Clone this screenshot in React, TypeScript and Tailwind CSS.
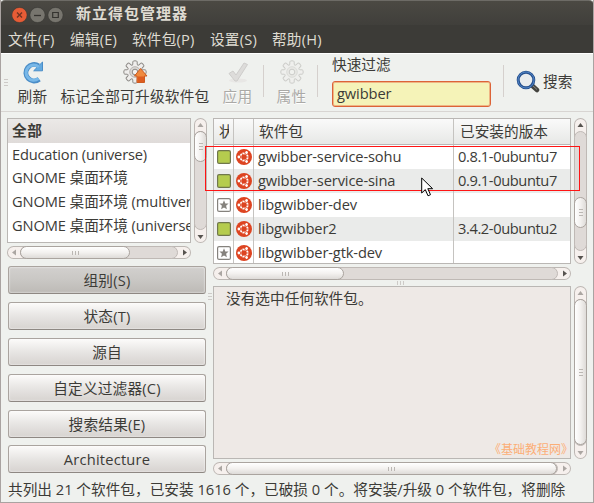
import type { ReactNode } from 'react';

const font = 'font-["Open_Sans","Noto_Sans_CJK_SC",sans-serif]';

function Arrow({ dir, dim }: { dir: 'l' | 'r' | 'u' | 'd'; dim?: boolean }) {
  const d = { l: 'M9 3.5 L5 6.5 L9 9.5Z', r: 'M5 3.5 L9 6.5 L5 9.5Z', u: 'M3.5 9 L6.5 5 L9.5 9Z', d: 'M3.5 5 L6.5 9 L9.5 5Z' }[dir];
  return <svg className="h-[13px] w-[13px] shrink-0" viewBox="0 0 13 13"><path d={d} fill={dim ? '#aba6a2' : '#57534f'} /></svg>;
}

function HBar({ thumb, dimL = true, dimR = false }: { thumb: string; dimL?: boolean; dimR?: boolean }) {
  return (
    <div className="flex h-[13px] w-full shrink-0 items-stretch overflow-hidden rounded-full bg-[#f6f0ed] ring-1 ring-inset ring-[#bcb7b3]">
      <Arrow dir="l" dim={dimL} />
      <div className="flex min-w-0 grow rounded-full border border-[#bfb9b5] bg-[#dfdad7]">
        <div className={`-my-px -ml-px flex items-center justify-center gap-[2px] rounded-full border border-[#aaa49f] bg-linear-to-b from-white via-[#f3f1ef] to-[#dedbd8] ${thumb}`}>
          <i className="h-[4px] w-px bg-[#bbb7b3]" /><i className="h-[4px] w-px bg-[#bbb7b3]" /><i className="h-[4px] w-px bg-[#bbb7b3]" />
        </div>
      </div>
      <Arrow dir="r" dim={dimR} />
    </div>
  );
}

function VBar({ thumb, dimU = false, dimD = false }: { thumb: string; dimU?: boolean; dimD?: boolean }) {
  return (
    <div className="flex h-full w-[13px] shrink-0 flex-col overflow-hidden rounded-full bg-[#f6f0ed] ring-1 ring-inset ring-[#bcb7b3]">
      <Arrow dir="u" dim={dimU} />
      <div className="flex min-h-0 grow flex-col rounded-full border border-[#bfb9b5] bg-[#dfdad7]">
        <div className={`-mx-px flex flex-col items-center justify-center gap-[2px] rounded-full border border-[#aaa49f] bg-linear-to-r from-white via-[#f3f1ef] to-[#dedbd8] ${thumb}`}>
          <i className="h-px w-[4px] bg-[#bbb7b3]" /><i className="h-px w-[4px] bg-[#bbb7b3]" /><i className="h-px w-[4px] bg-[#bbb7b3]" />
        </div>
      </div>
      <Arrow dir="d" dim={dimD} />
    </div>
  );
}

function Gear({ faded }: { faded?: boolean }) {
  return (
    <g opacity={faded ? 0.35 : 1} stroke="#8c8985" fill="#efeeec">
      {[0, 45, 90, 135, 180, 225, 270, 315].map((a) => (
        <path key={a} transform={`rotate(${a} 12 11)`} d="M9.8 3.4V0.8Q9.8 -.2 12 -.2T14.2 .8V3.4" />
      ))}
      <circle cx="12" cy="11" r="8" stroke="none" />
      {[22.5, 67.5, 112.5, 157.5, 202.5, 247.5, 292.5, 337.5].map((a) => (
        <path key={a} transform={`rotate(${a} 12 11)`} d="M11 3.2Q12 3.7 13 3.2" fill="none" />
      ))}
      <circle cx="12" cy="11" r="5.3" fill="#d9d7d4" stroke="#b9b6b2" />
      <circle cx="12" cy="11" r="2.8" fill="#f3f2f0" />
    </g>
  );
}

function Ubuntu() {
  return (
    <svg className="h-4 w-4" viewBox="0 0 16 16">
      <circle cx="8" cy="8" r="8" fill="#dd4421" />
      <circle cx="8" cy="8" r="3.7" fill="none" stroke="#fff" strokeWidth="1.8" />
      {[60, 180, 300].map((a) => (
        <g key={a} transform={`rotate(${a} 8 8)`}>
          <circle cx="13" cy="8" r="2.1" fill="#dd4421" />
          <circle cx="13.1" cy="8" r="1.4" fill="#fff" />
        </g>
      ))}
      {[0, 120, 240].map((a) => (
        <path key={a} transform={`rotate(${a} 8 8)`} d="M10.5 8H13" stroke="#dd4421" strokeWidth=".8" />
      ))}
    </svg>
  );
}

function Status({ on }: { on: boolean }) {
  return (
    <svg className="h-[14px] w-[14px]" viewBox="0 0 14 14">
      <rect x=".6" y=".6" width="12.8" height="12.8" rx="1.5" fill={on ? '#b5cc4e' : '#fff'} stroke={on ? '#70774c' : '#85827d'} strokeWidth="1.2" />
      {!on && <path d="M7 2.2 8.3 5.4 11.6 5.6 9.1 7.8 9.9 11.2 7 9.4 4.1 11.2 4.9 7.8 2.4 5.6 5.7 5.4Z" fill="#85827d" />}
    </svg>
  );
}

function Tool({ label, icon, cls, dim }: { label: string; icon: ReactNode; cls: string; dim?: boolean }) {
  return (
    <div className={`flex shrink-0 flex-col items-center ${cls}`}>
      <svg className="h-6 w-6 shrink-0 overflow-visible" viewBox="0 0 24 24">{icon}</svg>
      <span className={`mt-px whitespace-nowrap leading-5 tracking-[0.25px] ${dim ? 'text-[#aaa9a6] [text-shadow:0_1px_#fff]' : ''}`}>{label}</span>
    </div>
  );
}

const rows: [string, string, boolean][] = [
  ['gwibber-service-sohu', '0.8.1-0ubuntu7', true],
  ['gwibber-service-sina', '0.9.1-0ubuntu7', true],
  ['libgwibber-dev', '', false],
  ['libgwibber2', '3.4.2-0ubuntu2', true],
  ['libgwibber-gtk-dev', '', false],
];
const menus = [['文件(F)', 'w-[62px]'], ['编辑(E)', 'w-[62px]'], ['软件包(P)', 'w-[78px]'], ['设置(S)', 'w-[62px]'], ['帮助(H)', 'w-[62px]']];
const buttons = ['组别(S)', '状态(T)', '源自', '自定义过滤器(C)', '搜索结果(E)', 'Architecture'];

export default function App() {
  return (
    <div className={`relative flex h-[503px] w-[594px] flex-col overflow-hidden border-b border-l border-r border-[#a9a3a1] bg-[#eff1ee] text-[14.67px] text-[#3c3b37] ${font}`}>
      <div className="-mx-px flex h-[25px] shrink-0 items-center rounded-t-[5px] border-t border-[#6d6b66] bg-linear-to-b from-[#4b4943] to-[#403f3b] pl-3 pt-1">
        <svg className="h-4 w-[52px] shrink-0" viewBox="0 0 52 16" fill="none">
          <circle cx="7.5" cy="8" r="7.6" fill="#e75c36" stroke="#353430" strokeWidth=".5" />
          <path d="M5 5.5 10 10.5M10 5.5 5 10.5" stroke="#713322" strokeWidth="1.4" />
          <circle cx="25.5" cy="8" r="7.6" fill="#77756e" stroke="#353430" strokeWidth=".5" />
          <path d="M22 8.5H29" stroke="#353430" strokeWidth="1.3" />
          <circle cx="43.5" cy="8" r="7.6" fill="#77756e" stroke="#353430" strokeWidth=".5" />
          <path d="M40.7 5.5H46.3V10.5H40.7Z" stroke="#353430" strokeWidth="1.2" />
        </svg>
        <span className="-mt-[4px] ml-[12px] text-[15px] font-bold leading-5 tracking-[1px] text-[#dfdbd2]">新立得包管理器</span>
      </div>
      <div className="-mx-px flex h-7 shrink-0 items-center bg-[#3c3b37] pl-[8px] text-[#dfdbd2]">
        {menus.map(([m, w]) => <span key={m} className={`shrink-0 whitespace-nowrap leading-5 tracking-[0.2px] ${w}`}>{m}</span>)}
      </div>
      <div className="flex h-[59px] shrink-0 border-b border-[#d8d5d2] border-t border-t-white">
        <div className="mt-[25px] flex w-[16px] shrink-0 flex-col gap-[2px] pl-[3px]">
          {[0, 1, 2].map((i) => <i key={i} className="h-px w-1 bg-[#cdcac7]" />)}
        </div>
        <Tool cls="mt-[7px] w-[31px]" label="刷新" icon={
          <>
            <path d="M18.2 18.2A8.2 8.2 0 1 1 17.5 4.8" fill="none" stroke="#4a8dc7" strokeWidth="5" />
            <path d="M21.5 1V9.8H12.7Z" fill="#63aae0" stroke="#4a8dc7" strokeLinejoin="round" />
            <path d="M17.5 17.5A7.6 7.6 0 1 1 17.8 6" fill="none" stroke="#78b8e8" strokeWidth="3" />
          </>} />
        <Tool cls="ml-[11px] mt-[7px] w-[152px]" label="标记全部可升级软件包" icon={
          <>
            <Gear />
            <path d="M17.5 7.5 24 15H21.5V21.5H14V15H11.5Z" fill="#f08a3e" stroke="#cd5b20" strokeLinejoin="round" />
            <path d="M14.5 15.5H21V21H14.5Z" fill="#dd5d20" />
          </>} />
        <Tool cls="ml-[11px] mt-[7px] w-[31px]" dim label="应用" icon={
          <>
            <ellipse cx="12" cy="19.5" rx="9" ry="2" fill="#e8e7e5" />
            <path d="M3 12.5 7 10 10 14 18 2 21.5 3.5 11 20H9Z" fill="#dddcda" stroke="#cecdcb" />
          </>} />
        <div className="ml-[10px] mt-[11px] h-8 w-px shrink-0 bg-[#d5d0cd]" />
        <Tool cls="ml-[12px] mt-[7px] w-[31px]" dim label="属性" icon={<Gear faded />} />
        <div className="ml-[10px] mt-[11px] h-8 w-px shrink-0 bg-[#d5d0cd]" />
        <div className="ml-[14px] w-[159px] shrink-0">
          <div className="leading-5">快速过滤</div>
          <div className="mt-[7px] h-[26px] rounded-[3px] border border-[#dc6338] bg-[#f5f3b8] px-1 leading-[23px] shadow-[inset_0_0_0_1px_#efb584]"><span className="tracking-[-0.1px]">gwibber</span></div>
        </div>
        <div className="ml-[12px] mt-[11px] h-8 w-px shrink-0 bg-[#d5d0cd]" />
        <svg className="ml-[12px] mt-[16px] h-6 w-6 shrink-0" viewBox="0 0 24 24">
          <path d="M16 15.5 21 20" stroke="#44443f" strokeWidth="4.5" strokeLinecap="round" />
          <path d="M16.5 15.5 21 19.5" stroke="#898985" strokeWidth="1" />
          <circle cx="10" cy="10" r="7.8" fill="#e9eced" stroke="#28528f" strokeWidth="3" />
          <circle cx="10" cy="10" r="8" fill="none" stroke="#4f83c4" strokeWidth="1" />
        </svg>
        <span className="ml-[3px] mt-[17px] whitespace-nowrap leading-5">搜索</span>
      </div>
      <div className="flex h-[363px] shrink-0 pt-[6px]">
        <div className="ml-[6px] flex w-[200px] shrink-0 flex-col">
          <div className="flex h-[125px] shrink-0">
            <div className="w-[184px] shrink-0 overflow-hidden whitespace-nowrap border border-[#bab7b4] bg-white">
              <div className="h-6 bg-linear-to-b from-[#ebe9e7] to-[#dfdbd9] pl-1 font-bold leading-[22px] tracking-[0.5px]">全部</div>
              <div className="h-6 pl-1 leading-[23px] tracking-[-0.2px]">Education (universe)</div>
              <div className="h-6 pl-1 leading-[21px] tracking-[-0.1px]">GNOME 桌面环境</div>
              <div className="h-6 pl-1 leading-[21px] tracking-[-0.1px]">GNOME 桌面环境 (multiverse)</div>
              <div className="h-6 pl-1 leading-[21px] tracking-[-0.1px]">GNOME 桌面环境 (universe)</div>
            </div>
            <div className="ml-[3px]"><VBar thumb="-mt-px h-[31px]" dimU /></div>
          </div>
          <div className="mt-[3px] w-[184px]"><HBar thumb="w-[110px]" /></div>
          <div className="mt-[7px] flex flex-col gap-2 pl-px">
            {buttons.map((b, i) => (
              <div key={b} className={`flex h-7 w-[198px] items-center justify-center rounded-[3px] border border-[#aaa49f] border-b-[#8e8883] pb-px leading-5 tracking-[0.2px] shadow-[inset_0_0_2px_#ffffff] ${i === 5 ? '-mt-px' : ''} ${i === 0 ? 'bg-linear-to-b from-[#d2d0ce] via-[#c9c7c4] via-50% to-[#bdbab6]' : 'bg-linear-to-b from-[#fcfbfa] via-[#e7e5e3] via-50% to-[#d7d3d0]'}`}>{b}</div>
            ))}
          </div>
        </div>
        <div className="mt-[175px] flex w-[6px] shrink-0 flex-col gap-[2px] pl-px">
          {[0, 1, 2].map((i) => <i key={i} className="h-px w-1 bg-[#cdcac7]" />)}
        </div>
        <div className="flex w-[374px] shrink-0 flex-col">
          <div className="flex h-[146px] shrink-0">
            <div className="w-[358px] shrink-0 overflow-hidden border border-[#bab7b4] bg-white">
              <div className="flex h-[26px] border-b border-[#bab7b4] bg-linear-to-b from-[#fafafa] to-[#e7e8e6] leading-[25px]">
                <div className="w-[20px] shrink-0 border-r border-[#c5c3c0] pl-[5px]"><div className="w-[10px] overflow-hidden whitespace-nowrap">状态</div></div>
                <div className="w-[20px] shrink-0 border-r border-[#c5c3c0]" />
                <div className="w-[200px] shrink-0 border-r border-[#c5c3c0] pl-[5px]">软件包</div>
                <div className="pl-[6px]">已安装的版本</div>
              </div>
              {rows.map(([name, version, on], i) => (
                <div key={name} className={`flex h-6 leading-[23px] ${i % 2 ? 'bg-[#eaebea]' : 'bg-white'}`}>
                  <div className="flex w-[20px] shrink-0 items-center justify-center border-r border-[#c5c3c0]"><Status on={on} /></div>
                  <div className="flex w-[20px] shrink-0 items-center justify-center border-r border-[#c5c3c0]"><Ubuntu /></div>
                  <div className="w-[200px] shrink-0 whitespace-nowrap border-r border-[#c5c3c0] pl-1 tracking-[-0.13px]">{name}</div>
                  <div className="whitespace-nowrap pl-1 tracking-[-0.4px]">{version}</div>
                </div>
              ))}
            </div>
            <div className="ml-[3px]"><VBar thumb="mt-[65px] h-[31px]" /></div>
          </div>
          <div className="mt-[3px] w-[358px]"><HBar thumb="w-[118px]" /></div>
          <div className="flex h-[6px] w-[374px] items-center justify-center gap-[2px]">
            {[0, 1, 2].map((i) => <i key={i} className="h-1 w-px bg-[#cdcac7]" />)}
          </div>
          <div className="flex h-[173px] shrink-0">
            <div className="flex w-[358px] shrink-0 flex-col justify-between border border-[#bab7b4] bg-[#eee9e6]">
              <div className="pl-3 pt-px leading-5">没有选中任何软件包。</div>
              <div className="whitespace-nowrap pr-[2px] text-right text-[12px] leading-[17px] text-[#fcae76]"><span className="-mr-[5px]">《基础教程网》</span></div>
            </div>
            <div className="ml-[3px]"><VBar thumb="-mt-px h-[149px]" dimU dimD /></div>
          </div>
          <div className="mt-[3px] w-[358px]"><HBar thumb="w-[333px]" dimR /></div>
        </div>
      </div>
      <div className="whitespace-nowrap pl-[7px] pt-[4px] leading-5">共列出 21 个软件包，已安装 1616 个，已破损 0 个。将安装/升级 0 个软件包，将删除</div>
      <div className="absolute left-[204px] top-[146px] h-[45px] w-[375px] border border-[#ff1414]" />
      <svg className="absolute left-[420px] top-[177px] h-[20px] w-[13px]" viewBox="0 0 13 20">
        <path d="M.7 1V16L4.3 12.6 7 18.8 9.5 17.7 6.8 11.7H11.6Z" fill="#fff" stroke="#000" />
      </svg>
    </div>
  );
}
